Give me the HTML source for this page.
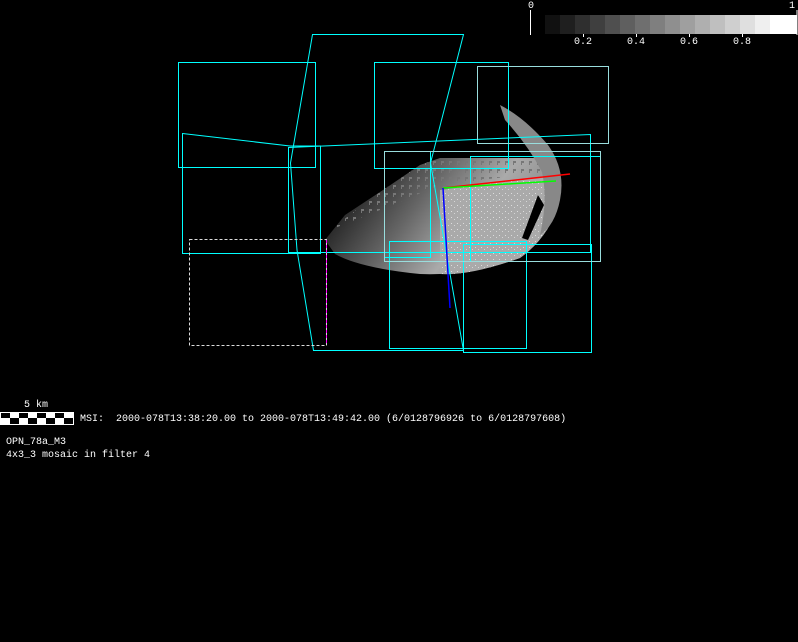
<!DOCTYPE html>
<html><head><style>
html,body{margin:0;padding:0;background:#000;width:798px;height:642px;overflow:hidden}
.t{position:absolute;color:#fff;font-family:"Liberation Mono","DejaVu Sans Mono",monospace;font-size:10px;line-height:12px;white-space:pre}
</style></head><body>
<svg width="798" height="642" style="position:absolute;left:0;top:0">
<defs>
<linearGradient id="g" gradientUnits="userSpaceOnUse" x1="360" y1="190" x2="470" y2="270">
<stop offset="0" stop-color="#2a2a2a"/><stop offset="0.4" stop-color="#666"/><stop offset="0.8" stop-color="#aaa"/><stop offset="1" stop-color="#999"/>
</linearGradient>
<pattern id="p" width="6" height="6" patternUnits="userSpaceOnUse"><rect x="1" y="1" width="1" height="1" fill="#fff" opacity=".6"/><rect x="4" y="3" width="1" height="1" fill="#fff" opacity=".5"/></pattern>
<pattern id="d" width="8" height="8" patternUnits="userSpaceOnUse"><rect x="1" y="1" width="3" height="2" fill="#777"/><rect x="1" y="3" width="1" height="2" fill="#777"/></pattern>
</defs>
<path d="M325,240 L345,215 L380,192 L420,165 L440,158 L545,158 Q563,185 556,212 Q545,240 520,258 Q470,276 420,274 Q360,268 335,254 Z" fill="url(#g)"/>
<path d="M330,230 L380,192 L420,165 L440,158 L545,158 L545,172 L440,185 L380,210 Z" fill="url(#d)"/>
<path d="M440,190 L552,175 Q563,190 556,212 Q545,240 520,258 Q470,276 440,274 Z" fill="#aaa"/>
<path d="M440,190 L552,175 Q563,190 556,212 Q545,240 520,258 Q470,276 440,274 Z" fill="url(#p)"/>
<path d="M500,105 Q525,118 548,145 Q566,170 560,200 Q555,225 540,235 Q548,200 542,172 Q528,145 505,120 Z" fill="#888"/>
<path d="M538,195 L544,205 L528,240 L522,238 Z" fill="#000"/>
<g fill="none" stroke="#0ff" stroke-width="1">
<path d="M178.5,62.5 H315.5 V167.5 H178.5 Z"/>
<path d="M312.5,34.5 H463.5 L430.5,163 L463.5,350.5 H313.5 L297,250 L290.5,163 Z"/>
<path d="M182.5,133.5 L290,146 H320.5 V253.5 H182.5 Z"/>
<path d="M374.5,62.5 H508.5 V168.5 H374.5 Z"/>
<path d="M288.5,147.5 L590.5,134.5 V252.5 H288.5 Z"/>
<path d="M470.5,156.5 H600.5 V261.5 H470.5 Z"/>
<path d="M389.5,241.5 H526.5 V348.5 H389.5 Z"/>
<path d="M463.5,244.5 H591.5 V352.5 H463.5 Z"/>
<path d="M384.5,151.5 H430.5 V257.5 H384.5 Z"/>
</g>
<g fill="none" stroke="#9dd" stroke-width="1">
<path d="M477.5,66.5 H608.5 V143.5 H477.5 Z"/>
<path d="M384.5,151.5 H600.5 V261.5 H384.5 Z"/>
</g>
<rect x="189.5" y="239.5" width="137" height="106" fill="none" stroke="#ddd" stroke-dasharray="3,2"/>
<line x1="326.5" y1="240" x2="326.5" y2="345" stroke="#f0f" stroke-dasharray="3,2"/>
<line x1="443" y1="188" x2="570" y2="174" stroke="#f00" stroke-width="1.5"/>
<line x1="443" y1="188" x2="556" y2="181" stroke="#0f0" stroke-width="1.5"/>
<line x1="443" y1="188" x2="450" y2="308" stroke="#00f" stroke-width="1.5"/>
<g>
<rect x="545" y="15" width="15" height="19" fill="#111"/><rect x="560" y="15" width="15" height="19" fill="#1f1f1f"/><rect x="575" y="15" width="15" height="19" fill="#2f2f2f"/><rect x="590" y="15" width="15" height="19" fill="#3f3f3f"/><rect x="605" y="15" width="15" height="19" fill="#4f4f4f"/><rect x="620" y="15" width="15" height="19" fill="#5f5f5f"/><rect x="635" y="15" width="15" height="19" fill="#6f6f6f"/><rect x="650" y="15" width="15" height="19" fill="#7f7f7f"/><rect x="665" y="15" width="15" height="19" fill="#8f8f8f"/><rect x="680" y="15" width="15" height="19" fill="#9f9f9f"/><rect x="695" y="15" width="15" height="19" fill="#afafaf"/><rect x="710" y="15" width="15" height="19" fill="#bfbfbf"/><rect x="725" y="15" width="15" height="19" fill="#cfcfcf"/><rect x="740" y="15" width="15" height="19" fill="#dfdfdf"/><rect x="755" y="15" width="15" height="19" fill="#efefef"/><rect x="770" y="15" width="27" height="19" fill="#fff"/>
</g>
<g stroke="#fff"><line x1="530.5" y1="10" x2="530.5" y2="35"/><line x1="797" y1="10" x2="797" y2="35"/><line x1="583.5" y1="34" x2="583.5" y2="37"/><line x1="636.5" y1="34" x2="636.5" y2="37"/><line x1="689.5" y1="34" x2="689.5" y2="37"/><line x1="742.5" y1="34" x2="742.5" y2="37"/></g>
<rect x="0" y="412" width="74" height="13" fill="#fff"/>
<g fill="#000"><rect x="1" y="413" width="9" height="5"/><rect x="19" y="413" width="9" height="5"/><rect x="37" y="413" width="9" height="5"/><rect x="55" y="413" width="9" height="5"/><rect x="10" y="418" width="9" height="6"/><rect x="28" y="418" width="9" height="6"/><rect x="46" y="418" width="9" height="6"/><rect x="64" y="418" width="9" height="6"/></g>
</svg>
<div class="t" style="left:528px;top:1px">0</div>
<div class="t" style="left:789px;top:1px">1</div>
<div class="t" style="left:574px;top:37px">0.2</div>
<div class="t" style="left:627px;top:37px">0.4</div>
<div class="t" style="left:680px;top:37px">0.6</div>
<div class="t" style="left:733px;top:37px">0.8</div>
<div class="t" style="left:24px;top:400px">5 km</div>
<div class="t" style="left:80px;top:414px">MSI:  2000-078T13:38:20.00 to 2000-078T13:49:42.00 (6/0128796926 to 6/0128797608)</div>
<div class="t" style="left:6px;top:437px">OPN_78a_M3</div>
<div class="t" style="left:6px;top:450px">4x3_3 mosaic in filter 4</div>
</body></html>
